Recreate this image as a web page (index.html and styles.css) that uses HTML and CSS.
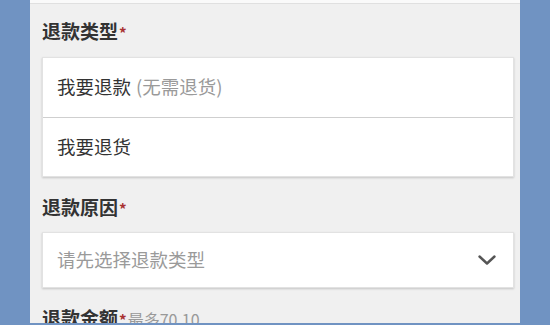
FILE: index.html
```html
<!DOCTYPE html>
<html lang="zh-CN">
<head>
<meta charset="utf-8">
<title>退款</title>
<link rel="stylesheet" href="styles.css">
</head>
<body>
<div class="panel">
  <div class="topstrip"></div>
  <div class="label">退款类型<span class="req">*</span></div>
  <div class="card">
    <div class="row">我要退款 <span class="muted">(无需退货)</span></div>
    <div class="row">我要退货</div>
  </div>
  <div class="label label-gap">退款原因<span class="req">*</span></div>
  <div class="select">
    <span class="placeholder">请先选择退款类型</span>
    <svg class="chev" width="18" height="10" viewBox="0 0 18 10"><path d="M1.5 1.5 L9 8.5 L16.5 1.5" fill="none" stroke="#555" stroke-width="2.4" stroke-linecap="round" stroke-linejoin="round"/></svg>
  </div>
  <div class="label label-gap2">退款金额<span class="req">*</span><span class="hint">最多70.10</span></div>
</div>
</body>
</html>
```
FILE: styles.css
```css
html, body {
  margin: 0;
  padding: 0;
}
body {
  background: #7093c2;
  font-family: "Noto Sans CJK SC", "Noto Sans", "Liberation Sans", sans-serif;
  height: 325px;
  overflow: hidden;
}
.panel {
  margin-left: 30px;
  width: 490px;
  height: 323px;
  box-sizing: border-box;
  padding: 0 6px 0 12px;
  background: #f0f0f0;
  overflow: hidden;
}
.topstrip {
  height: 3px;
  margin: 0 -6px 0 -12px;
  background: #fafafa;
  border-bottom: 1px solid #e0e0e0;
}
.label {
  margin-top: 14px;
  height: 26px;
  line-height: 26px;
  font-size: 19px;
  font-weight: 700;
  color: #333;
  white-space: nowrap;
}
.label-gap { margin-top: 17px; }
.label-gap2 { margin-top: 17px; }
.req {
  color: #a83232;
  font-size: 15px;
  font-weight: 700;
  margin-left: 1px;
}
.hint {
  font-size: 16px;
  font-weight: 400;
  color: #999;
  margin-left: 1px;
}
.card {
  margin-top: 13px;
  background: #fff;
  border: 1px solid #e2e2e2;
  box-shadow: 0 1px 2px rgba(0,0,0,0.18);
}
.row {
  height: 59px;
  box-sizing: border-box;
  padding-bottom: 3px;
  display: flex;
  align-items: center;
  padding-left: 14px;
  font-size: 18.5px;
  color: #333;
}
.row + .row {
  border-top: 1px solid #cfcfcf;
}
.muted {
  color: #9a9a9a;
  margin-left: 5px;
}
.select {
  margin-top: 12px;
  height: 54px;
  background: #fff;
  border: 1px solid #e2e2e2;
  box-shadow: 0 1px 2px rgba(0,0,0,0.18);
  display: flex;
  align-items: center;
  justify-content: space-between;
  padding: 0 17px 0 14px;
}
.placeholder {
  font-size: 18.5px;
  color: #9a9a9a;
  padding-bottom: 3px;
}
.chev {
  display: block;
}
```
